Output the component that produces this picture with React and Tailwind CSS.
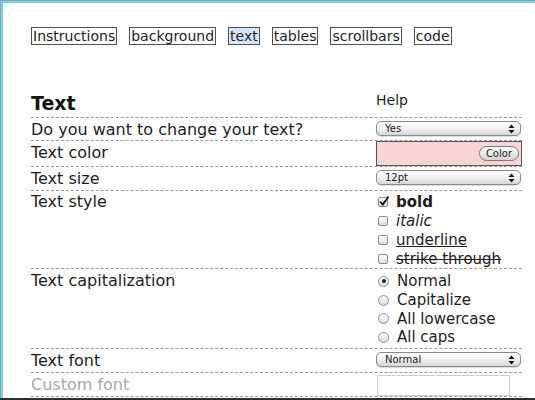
import React from 'react'

const tabs = ['Instructions', 'background', 'text', 'tables', 'scrollbars', 'code']

const Arrows = () => (
  <svg width="7" height="10" viewBox="0 0 7 10" className="shrink-0">
    <path d="M3.5 0.5 L6.5 4 L0.5 4 Z" fill="#111" />
    <path d="M3.5 9.5 L6.5 6 L0.5 6 Z" fill="#111" />
  </svg>
)

const Select = ({ value }) => (
  <div className="w-[145px] h-[15px] rounded-[5px] border border-[#8a8a8a] bg-gradient-to-b from-white via-[#f1f1f1] to-[#d6d6d6] flex items-center justify-between pl-[8px] pr-[5px] shadow-[0_1px_1px_rgba(0,0,0,0.15)]">
    <span className="text-[10px] leading-none font-medium text-[#222]">{value}</span>
    <Arrows />
  </div>
)

const Checkbox = ({ checked }) => (
  <div className="relative w-[10px] h-[10px] rounded-[2px] border border-[#8c8c8c] bg-gradient-to-b from-white to-[#dcdcdc] shrink-0">
    {checked && (
      <svg width="12" height="12" viewBox="0 0 12 12" className="absolute -left-[1px] -top-[3px]">
        <path d="M2 6.5 L4.8 9.5 L10.5 1.5" stroke="#111" strokeWidth="1.8" fill="none" />
      </svg>
    )}
  </div>
)

const Radio = ({ checked }) => (
  <div className="w-[11px] h-[11px] rounded-full border border-[#8c8c8c] bg-gradient-to-b from-white to-[#dcdcdc] shrink-0 flex items-center justify-center">
    {checked && <div className="w-[4px] h-[4px] rounded-full bg-[#222]" />}
  </div>
)

const Row = ({ label, h, muted, children }) => (
  <div className={`flex border-b border-dashed border-[#9a9a9a] ${h}`}>
    <div className={`w-[345px] text-[16px] leading-[22px] pt-[1px] ${muted ? 'text-[#a8a8a8]' : 'text-[#1e1e1e]'}`}>{label}</div>
    <div className="w-[146px] pt-[3px]">{children}</div>
  </div>
)

export default function App () {
  const styles = [
    { label: 'bold', cls: 'font-bold', checked: true },
    { label: 'italic', cls: 'italic' },
    { label: 'underline', cls: 'underline' },
    { label: 'strike through', cls: 'line-through' }
  ]
  const caps = ['Normal', 'Capitalize', 'All lowercase', 'All caps']

  return (
    <div className="w-[535px] h-[400px] overflow-hidden bg-white flex flex-col font-['DejaVu_Sans',Verdana,sans-serif]">
      <div className="flex-1 border-t border-l border-[#8aa4ab] overflow-hidden">
        <div className="h-full border-t-2 border-l-2 border-[#74d4ec] pl-[28px] pt-[24px]">
          {/* tabs */}
          <div className="flex gap-[12px]">
            {tabs.map((t) => (
              <div
                key={t}
                className={`border border-[#505050] px-[1px] text-[14px] leading-[16px] text-[#1e1e1e] ${t === 'text' ? 'bg-[#d5e5fa]' : ''}`}
              >
                {t}
              </div>
            ))}
          </div>

          {/* settings table */}
          <div className="w-[491px] mt-[46px]">
            <div className="flex items-end h-[27px] border-b border-dashed border-[#9a9a9a] pb-[3px]">
              <div className="w-[345px] text-[19px] font-bold leading-[22px] text-[#111]">Text</div>
              <div className="text-[14px] leading-[20px] text-[#1e1e1e] pb-[4px]">Help</div>
            </div>

            <Row label="Do you want to change your text?" h="h-[23px]">
              <Select value="Yes" />
            </Row>

            <div className="flex h-[26px] border-b border-dashed border-[#9a9a9a]">
              <div className="w-[345px] text-[16px] leading-[22px] pt-[1px] text-[#1e1e1e]">Text color</div>
              <div className="w-[146px]">
                <div className="h-[25px] border border-[#555] bg-[#f8d4d4] flex items-center justify-end pr-[2px]">
                  <div className="h-[15px] px-[6px] rounded-full border border-[#7a7a7a] bg-gradient-to-b from-white to-[#d4d4d4] text-[10px] leading-[13px] font-medium text-[#222]">
                    Color
                  </div>
                </div>
              </div>
            </div>

            <Row label="Text size" h="h-[24px]">
              <Select value="12pt" />
            </Row>

            <div className="flex h-[78px] border-b border-dashed border-[#9a9a9a]">
              <div className="w-[345px] text-[16px] leading-[22px] text-[#1e1e1e]">Text style</div>
              <div className="w-[146px] pl-[2px] pt-[1px] flex flex-col">
                {styles.map((s) => (
                  <div key={s.label} className="flex items-center gap-[8px] h-[19px]">
                    <Checkbox checked={s.checked} />
                    <span className={`text-[15px] leading-[18px] text-[#1e1e1e] ${s.cls}`}>{s.label}</span>
                  </div>
                ))}
              </div>
            </div>

            <div className="flex h-[80px] border-b border-dashed border-[#9a9a9a]">
              <div className="w-[345px] text-[16px] leading-[22px] pt-[1px] text-[#1e1e1e]">Text capitalization</div>
              <div className="w-[146px] pl-[2px] pt-[3px] flex flex-col">
                {caps.map((c, i) => (
                  <div key={c} className="flex items-center gap-[8px] h-[18.7px]">
                    <Radio checked={i === 0} />
                    <span className="text-[15px] leading-[18px] text-[#1e1e1e]">{c}</span>
                  </div>
                ))}
              </div>
            </div>

            <Row label="Text font" h="h-[24px]">
              <Select value="Normal" />
            </Row>

            <Row label="Custom font" h="h-[24px]" muted>
              <div className="ml-[1px] -mt-[1px] w-[133px] h-[21px] border border-[#cfcfcf] bg-white" />
            </Row>
          </div>
        </div>
      </div>
      <div className="h-[2px] bg-[#2e2e2e]" />
    </div>
  )
}
